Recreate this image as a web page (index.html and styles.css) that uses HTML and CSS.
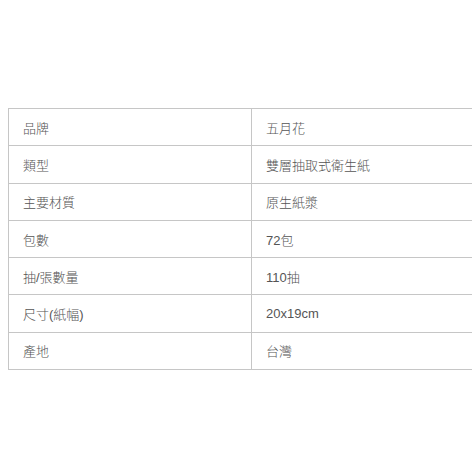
FILE: index.html
```html
<!DOCTYPE html>
<html lang="zh-Hant">
<head>
<meta charset="utf-8">
<link rel="stylesheet" href="styles.css">
</head>
<body>
<div class="wrap">
<table class="spec">
<tr><td>品牌</td><td>五月花</td></tr>
<tr><td>類型</td><td>雙層抽取式衛生紙</td></tr>
<tr><td>主要材質</td><td>原生紙漿</td></tr>
<tr><td>包數</td><td>72包</td></tr>
<tr><td>抽/張數量</td><td>110抽</td></tr>
<tr><td>尺寸(紙幅)</td><td>20x19cm</td></tr>
<tr><td>產地</td><td>台灣</td></tr>
</table>
</div>
</body>
</html>
```
FILE: styles.css
```css
html, body {
  margin: 0;
  padding: 0;
  background: #fff;
}
body {
  padding: 108px 0 0 8px;
  overflow: hidden;
  font-family: "Liberation Sans", Arial, "Noto Sans CJK TC", sans-serif;
}
.wrap {
  overflow: hidden;
}
.spec {
  border-collapse: collapse;
  width: 486px;
  table-layout: fixed;
}
.spec td {
  border: 1px solid #c6c6c6;
  height: 37.3px;
  padding: 0 14px;
  font-size: 13px;
  font-weight: 300;
  color: #555;
  box-sizing: border-box;
  vertical-align: middle;
}
.spec td:first-child {
  width: 243px;
}
```
